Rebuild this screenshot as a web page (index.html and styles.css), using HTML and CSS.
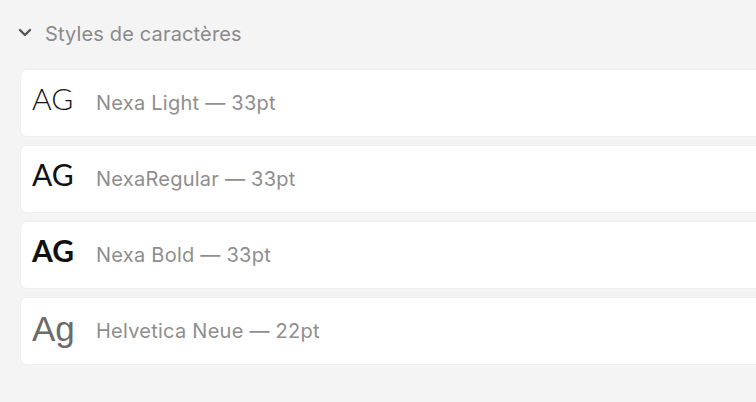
FILE: index.html
```
<!DOCTYPE html>
<html lang="fr">
<head>
<meta charset="utf-8">
<link rel="stylesheet" href="styles.css">
</head>
<body>
<div class="panel">
  <div class="header">
    <svg class="chev" width="14" height="9" viewBox="0 0 14 9"><path d="M2 2 L7 7 L12 2" fill="none" stroke="#555" stroke-width="2.4" stroke-linecap="round" stroke-linejoin="round"/></svg>
    <span class="title">Styles de caractères</span>
  </div>
  <div class="list">
    <div class="card"><span class="sample light">AG</span><span class="label">Nexa Light — 33pt</span></div>
    <div class="card"><span class="sample regular">AG</span><span class="label">NexaRegular — 33pt</span></div>
    <div class="card"><span class="sample bold">AG</span><span class="label">Nexa Bold — 33pt</span></div>
    <div class="card"><span class="sample helv">Ag</span><span class="label">Helvetica Neue — 22pt</span></div>
  </div>
</div>
</body>
</html>
```
FILE: styles.css
```
html, body {
  margin: 0;
  padding: 0;
  background: #f4f4f4;
  width: 756px;
  height: 402px;
  overflow: hidden;
  font-family: Inter, "Noto Sans", sans-serif;
}
.panel {
  padding: 21px 0 0 21px;
}
.header {
  display: flex;
  align-items: center;
  height: 26px;
}
.chev {
  margin-left: -3px;
  margin-right: 13px;
  margin-top: -3px;
}
.title {
  font-size: 20px;
  color: #8a8a8a;
  letter-spacing: 0.15px;
}
.list {
  margin-top: 23px;
  display: flex;
  flex-direction: column;
  gap: 10px;
}
.card {
  height: 66px;
  background: #fff;
  border-radius: 6px 0 0 6px;
  display: flex;
  align-items: center;
  box-shadow: 0 0 0 1px #efefef;
}
.sample {
  width: 64px;
  padding-left: 11px;
  box-sizing: border-box;
  color: #111;
  font-family: Lato, Inter, sans-serif;
  font-size: 30px;
  margin-top: -10px;
  flex: none;
}
.light { font-weight: 300; }
.regular { font-weight: 400; }
.bold { font-weight: 700; }
.helv {
  font-family: "Liberation Sans", Arial, sans-serif;
  color: #6b6b6b;
  font-size: 35px;
  margin-top: -4px;
}
.label {
  margin-left: 11px;
  font-size: 20px;
  color: #8e8e8e;
  letter-spacing: 0.25px;
}
```
